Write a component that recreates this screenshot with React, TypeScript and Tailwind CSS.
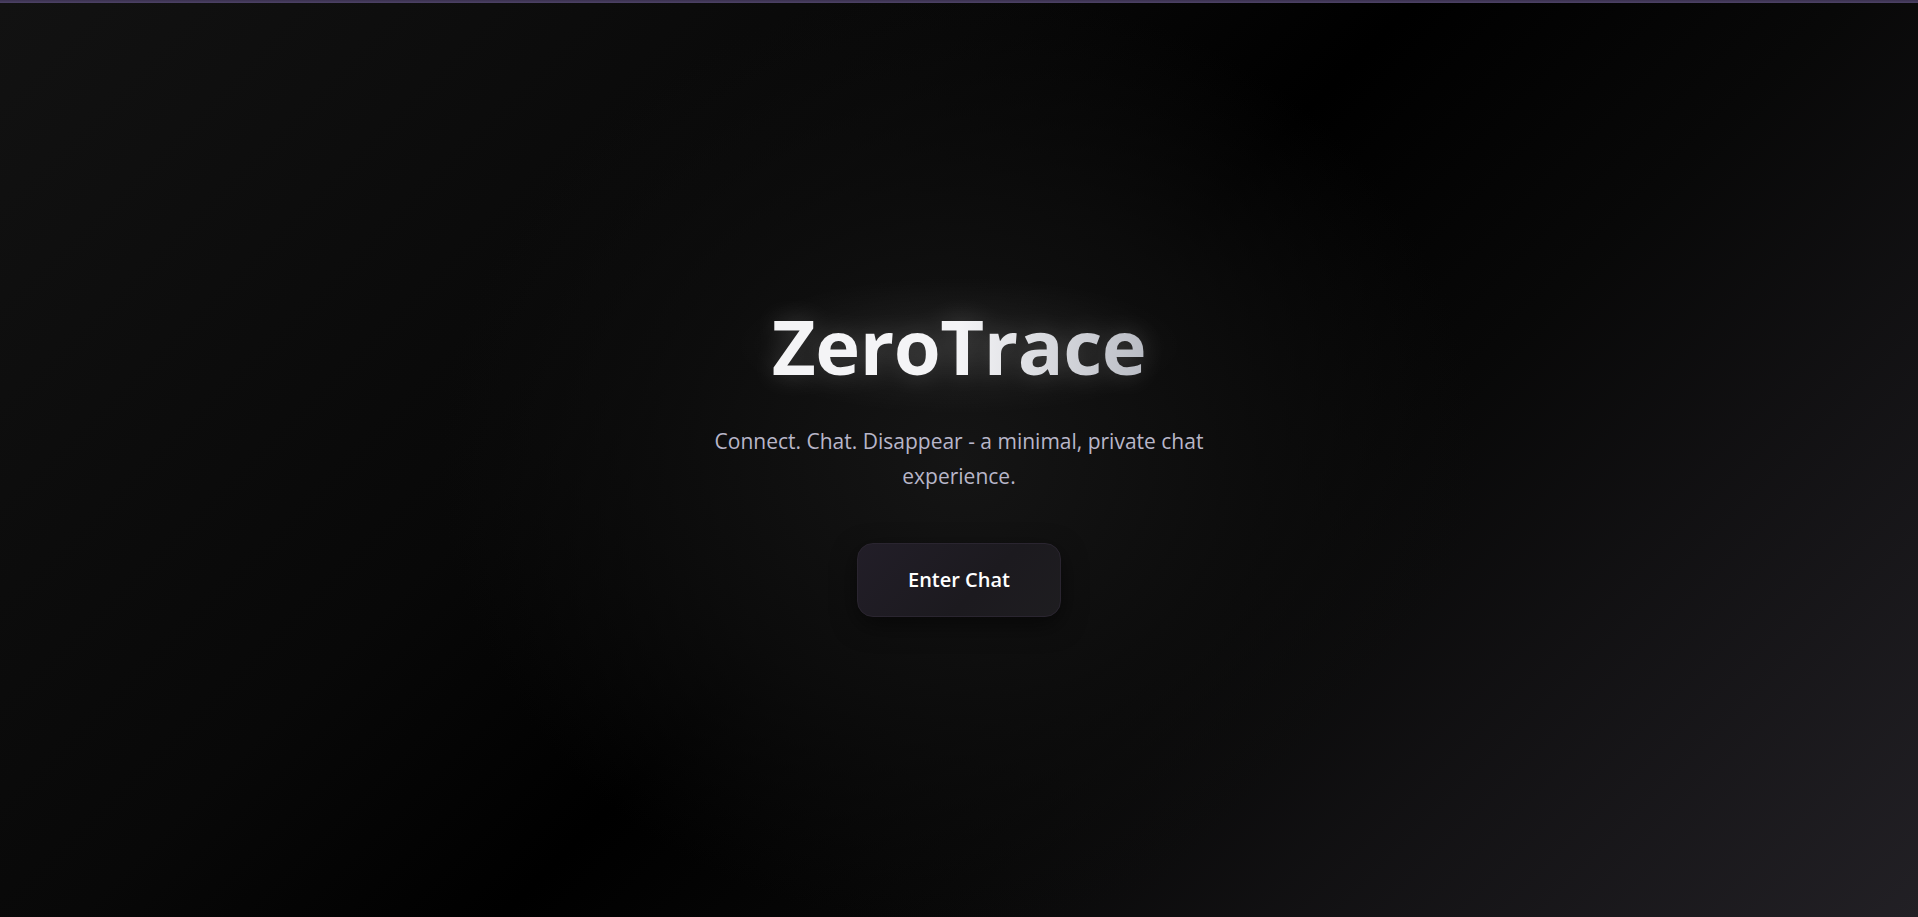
import React from "react";

export default function App() {
  return (
    <div
      className="relative w-full h-[917px] overflow-hidden bg-black"
      style={{ fontFamily: '"Open Sans", "Noto Sans", sans-serif' }}
    >
      <div className="absolute inset-0 bg-[linear-gradient(135deg,#121212_0%,#080808_35%,#000000_50%,#080808_65%,#222025_100%)]" />
      <div className="absolute inset-0 bg-[radial-gradient(ellipse_520px_470px_at_50%_50%,rgba(22,22,22,0.95)_0%,rgba(14,14,14,0.8)_55%,rgba(0,0,0,0)_100%)]" />
      <div className="absolute top-0 left-0 right-0 h-[3px] bg-[linear-gradient(to_bottom,#3b3250,#4d4266)]" />
      <div className="relative flex flex-col items-center justify-center h-full">
        <div className="relative">
          <div className="absolute -inset-x-10 -inset-y-6 rounded-full bg-[radial-gradient(ellipse_at_center,rgba(255,255,255,0.07)_0%,rgba(255,255,255,0)_70%)]" />
          <h1 className="relative text-[76px] leading-[1.2] font-bold tracking-[-0.5px] bg-[linear-gradient(90deg,#f4f4f6_0%,#f4f4f6_50%,#b9bcc4_100%)] bg-clip-text text-transparent [filter:drop-shadow(0_0_12px_rgba(255,255,255,0.18))]">
            ZeroTrace
          </h1>
        </div>
        <p className="mt-[33px] max-w-lg text-center text-[21px] leading-[35px] text-[#b8b6c9]">
          Connect. Chat. Disappear - a minimal, private chat experience.
        </p>
        <button className="mt-[49px] px-[50px] h-[74px] rounded-2xl border border-[#2a2530] bg-[linear-gradient(135deg,#221e28_0%,#1c1a1f_60%,#1e1d20_100%)] text-white text-[20px] font-semibold shadow-[0_8px_24px_rgba(0,0,0,0.5)]">
          Enter Chat
        </button>
      </div>
    </div>
  );
}
